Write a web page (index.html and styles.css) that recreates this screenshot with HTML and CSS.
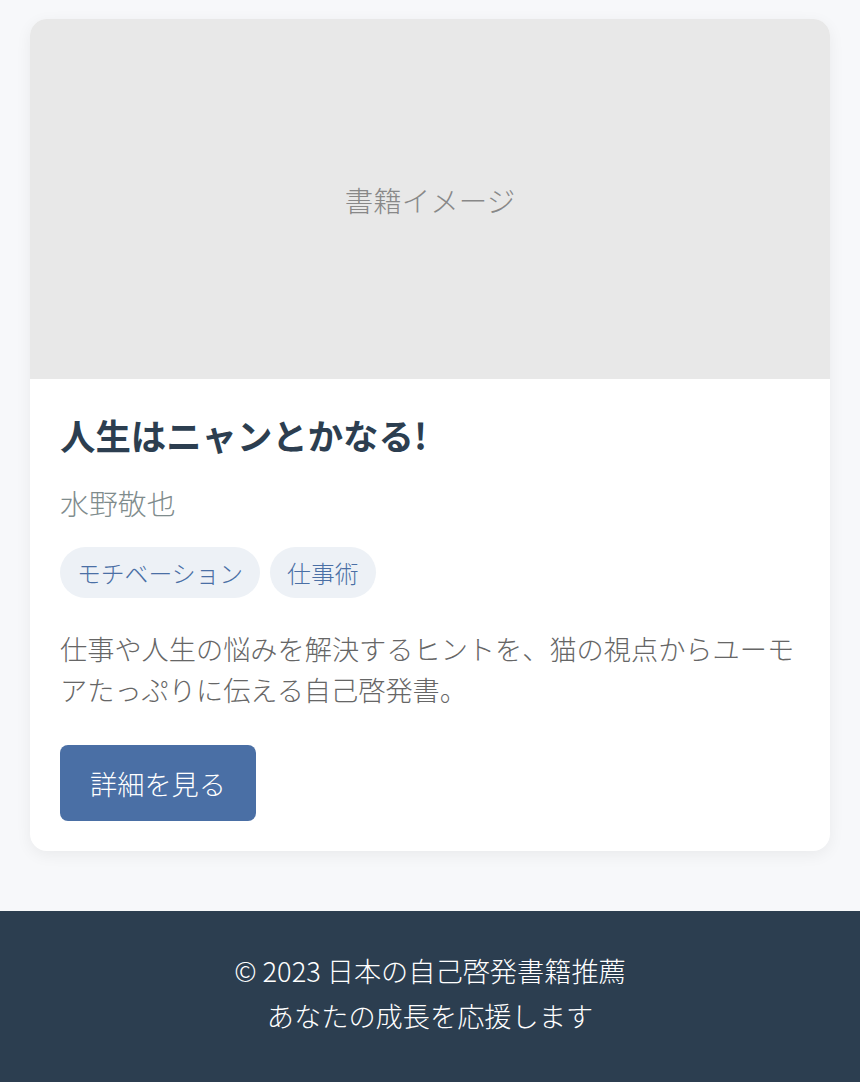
FILE: index.html
```html
<!DOCTYPE html>
<html lang="ja">

<head>
  <meta charset="UTF-8">
  <meta name="viewport" content="width=device-width, initial-scale=1.0">
  <title>日本の自己啓発書籍推薦</title>
  <link rel="stylesheet" href="styles.css">
</head>

<body>
  <main class="main">
    <div class="book-card">
      <div class="book-image">書籍イメージ</div>
      <div class="book-info">
        <h2 class="book-title">人生はニャンとかなる!</h2>
        <p class="book-author">水野敬也</p>
        <div class="book-tags">
          <span class="tag">モチベーション</span>
          <span class="tag">仕事術</span>
        </div>
        <p class="book-desc">仕事や人生の悩みを解決するヒントを、猫の視点からユーモアたっぷりに伝える自己啓発書。</p>
        <a href="#" class="detail-button">詳細を見る</a>
      </div>
    </div>
  </main>

  <footer class="footer">
    <p>© 2023 日本の自己啓発書籍推薦</p>
    <p>あなたの成長を応援します</p>
  </footer>
</body>

</html>
```

FILE: styles.css
```css
    html,
    body {
      margin: 0;
      padding: 0;
    }

    body {
      font-family: "Noto Sans CJK JP", sans-serif;
      font-weight: 300;
      background-color: #f7f8fa;
      color: #333;
      font-size: 27.2px;
      min-height: 100vh;
      display: flex;
      flex-direction: column;
    }

    .main {
      padding: 19px 30px 60px;
    }

    .book-card {
      background-color: #fff;
      border-radius: 17px;
      overflow: hidden;
      box-shadow: 0 4px 16px rgba(0, 0, 0, 0.06);
    }

    .book-image {
      height: 360px;
      background-color: #e8e8e8;
      color: #888;
      font-size: 28.5px;
      display: flex;
      align-items: center;
      justify-content: center;
    }

    .book-info {
      padding: 31px 30px 30px;
    }

    .book-title {
      margin: 0 0 21px;
      font-size: 35.4px;
      line-height: 49px;
      font-weight: 700;
      color: #2c3e50;
    }

    .book-author {
      margin: 0 0 23px;
      font-size: 28.9px;
      line-height: 44px;
      color: #7f8c8d;
    }

    .book-tags {
      display: flex;
      gap: 10px;
      margin-bottom: 30px;
    }

    .tag {
      background-color: #edf1f6;
      color: #4a6fa5;
      font-size: 23.8px;
      line-height: 34px;
      padding: 8.5px 17px;
      border-radius: 26px;
    }

    .book-desc {
      margin: 0 0 35px;
      font-size: 27.2px;
      line-height: 41px;
      color: #666;
    }

    .detail-button {
      display: inline-block;
      background-color: #4a6fa5;
      color: #fff;
      text-decoration: none;
      font-size: 27.2px;
      line-height: 43px;
      padding: 16.5px 30px;
      border-radius: 8px;
    }

    .footer {
      flex: 1;
      background-color: #2c3e50;
      color: #fff;
      text-align: center;
      padding: 37px 20px 40px;
      font-size: 27.2px;
      line-height: 45px;
    }

    .footer p {
      margin: 0;
    }
```
